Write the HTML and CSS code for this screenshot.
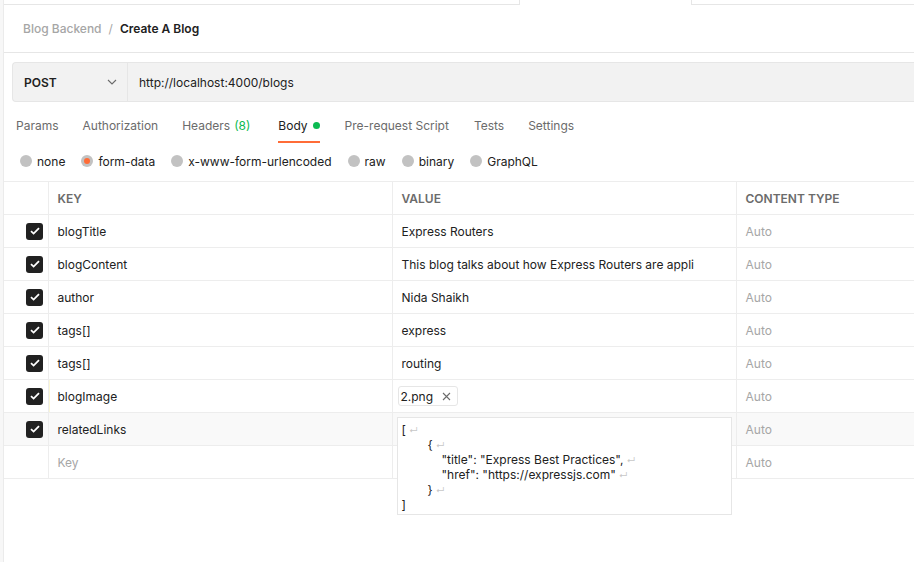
FILE: index.html
```html
<!DOCTYPE html>
<html>
<head>
<meta charset="utf-8">
<link rel="stylesheet" href="styles.css">
</head>
<body>
<div class="app">
  <div class="gutter"></div>
  <div class="main">
    <div class="tabstrip">
      <div class="ts-left"></div>
      <div class="ts-active"></div>
      <div class="ts-right"></div>
    </div>
    <div class="breadcrumb">
      <span class="crumb-parent">Blog Backend</span>
      <span class="crumb-sep">/</span>
      <span class="crumb-current">Create A Blog</span>
    </div>
    <div class="urlrow">
      <div class="urlbar">
        <div class="method">
          <span class="method-name">POST</span>
          <svg class="chev" width="10" height="6" viewBox="0 0 10 6"><path d="M1 1l4 4 4-4" fill="none" stroke="#6b6b6b" stroke-width="1.1"/></svg>
        </div>
        <div class="url">http://localhost:4000/blogs</div>
      </div>
    </div>
    <nav class="reqtabs">
      <span class="rtab">Params</span>
      <span class="rtab">Authorization</span>
      <span class="rtab headers">Headers <span class="count">(8)</span></span>
      <span class="rtab active">Body <span class="gdot"></span></span>
      <span class="rtab pre">Pre-request Script</span>
      <span class="rtab">Tests</span>
      <span class="rtab">Settings</span>
    </nav>
    <div class="bodytypes">
      <label class="radio"><span class="circle"></span>none</label>
      <label class="radio"><span class="circle on"></span>form-data</label>
      <label class="radio"><span class="circle"></span>x-www-form-urlencoded</label>
      <label class="radio"><span class="circle"></span>raw</label>
      <label class="radio"><span class="circle"></span>binary</label>
      <label class="radio"><span class="circle"></span>GraphQL</label>
    </div>
    <table class="params">
      <colgroup><col class="c-chk"><col class="c-key"><col class="c-val"><col class="c-type"></colgroup>
      <thead>
        <tr><th></th><th>KEY</th><th>VALUE</th><th>CONTENT TYPE</th></tr>
      </thead>
      <tbody>
        <tr><td class="chk"><span class="cb"><svg width="10" height="8" viewBox="0 0 10 8"><path d="M1 4.2l2.6 2.4L9 1.2" fill="none" stroke="#fff" stroke-width="1.8"/></svg></span></td><td>blogTitle</td><td>Express Routers</td><td class="auto">Auto</td></tr>
        <tr><td class="chk"><span class="cb"><svg width="10" height="8" viewBox="0 0 10 8"><path d="M1 4.2l2.6 2.4L9 1.2" fill="none" stroke="#fff" stroke-width="1.8"/></svg></span></td><td>blogContent</td><td>This blog talks about how Express Routers are appli</td><td class="auto">Auto</td></tr>
        <tr><td class="chk"><span class="cb"><svg width="10" height="8" viewBox="0 0 10 8"><path d="M1 4.2l2.6 2.4L9 1.2" fill="none" stroke="#fff" stroke-width="1.8"/></svg></span></td><td>author</td><td>Nida Shaikh</td><td class="auto">Auto</td></tr>
        <tr><td class="chk"><span class="cb"><svg width="10" height="8" viewBox="0 0 10 8"><path d="M1 4.2l2.6 2.4L9 1.2" fill="none" stroke="#fff" stroke-width="1.8"/></svg></span></td><td>tags[]</td><td>express</td><td class="auto">Auto</td></tr>
        <tr><td class="chk"><span class="cb"><svg width="10" height="8" viewBox="0 0 10 8"><path d="M1 4.2l2.6 2.4L9 1.2" fill="none" stroke="#fff" stroke-width="1.8"/></svg></span></td><td>tags[]</td><td>routing</td><td class="auto">Auto</td></tr>
        <tr><td class="chk"><span class="cb"><svg width="10" height="8" viewBox="0 0 10 8"><path d="M1 4.2l2.6 2.4L9 1.2" fill="none" stroke="#fff" stroke-width="1.8"/></svg></span></td><td class="key-mark">blogImage</td><td class="fileval"><span class="chip">2.png<svg class="x" width="9" height="9" viewBox="0 0 9 9"><path d="M1 1l7 7M8 1L1 8" stroke="#6b6b6b" stroke-width="1.1"/></svg></span></td><td class="auto">Auto</td></tr>
        <tr class="hover"><td class="chk"><span class="cb"><svg width="10" height="8" viewBox="0 0 10 8"><path d="M1 4.2l2.6 2.4L9 1.2" fill="none" stroke="#fff" stroke-width="1.8"/></svg></span></td><td>relatedLinks</td><td class="editing">
          <div class="editor">
            <div class="ln">[<span class="ret">↵</span></div>
            <div class="ln i1">{<span class="ret">↵</span></div>
            <div class="ln i2">"title": "Express Best Practices",<span class="ret">↵</span></div>
            <div class="ln i2">"href": "https://expressjs.com"<span class="ret">↵</span></div>
            <div class="ln i1">}<span class="ret">↵</span></div>
            <div class="ln">]</div>
          </div>
        </td><td class="auto">Auto</td></tr>
        <tr><td class="chk"></td><td class="placeholder">Key</td><td></td><td class="auto">Auto</td></tr>
      </tbody>
    </table>
  </div>
</div>
</body>
</html>
```

FILE: styles.css
```css
html, body {
  margin: 0;
  padding: 0;
  background: #fff;
}
body {
  font-family: Inter, "Noto Sans", sans-serif;
  font-size: 12px;
  color: #212121;
  width: 914px;
  height: 562px;
  overflow: hidden;
}
.app {
  display: flex;
  height: 562px;
}
.gutter {
  width: 3px;
  background: #f7f7f7;
  border-right: 1px solid #ebebeb;
  flex: none;
}
.main {
  flex: 1;
  min-width: 0;
  overflow: hidden;
}
.tabstrip {
  display: flex;
  height: 5px;
}
.ts-left {
  width: 515px;
  border-bottom: 1px solid #e6e6e6;
}
.ts-active {
  width: 171px;
  border-left: 1px solid #e6e6e6;
  border-right: 1px solid #e6e6e6;
}
.ts-right {
  flex: 1;
  border-bottom: 1px solid #e6e6e6;
}
.breadcrumb {
  height: 47px;
  border-bottom: 1px solid #e6e6e6;
  display: flex;
  align-items: center;
  padding-left: 19px;
  gap: 7px;
  font-weight: 500;
}
.crumb-parent { color: #a6a6a6; }
.crumb-sep { color: #a6a6a6; font-weight: 400; }
.crumb-current { color: #212121; font-weight: 600; }
.urlrow {
  padding: 9px 0 0 8px;
}
.urlbar {
  display: flex;
  height: 38px;
  background: #f2f2f2;
  border: 1px solid #e6e6e6;
  border-right: none;
  border-radius: 4px 0 0 4px;
}
.method {
  padding-left: 11px;
  padding-right: 10px;
  width: 93px;
  border-right: 1px solid #e6e6e6;
  display: flex;
  align-items: center;
  justify-content: space-between;
}
.method-name {
  font-weight: 600;
  font-size: 12px;
  color: #212121;
}
.url {
  display: flex;
  align-items: center;
  padding-left: 11px;
  color: #212121;
}
.reqtabs {
  display: flex;
  gap: 24px;
  padding-left: 12px;
  height: 33px;
  margin-top: 8px;
  align-items: stretch;
}
.rtab {
  display: flex;
  align-items: center;
  gap: 4px;
  color: #6b6b6b;
  border-bottom: 2px solid transparent;
}
.rtab.headers { margin-right: 4px; }
.rtab.active { margin-right: 1px; }
.rtab.pre { margin-right: 1px; }
.rtab.active {
  color: #212121;
  border-bottom-color: #ff6c37;
}
.count { color: #0cbb52; }
.gdot {
  width: 7px;
  height: 7px;
  border-radius: 50%;
  background: #0cbb52;
  display: inline-block;
  margin-left: 1px;
}
.bodytypes {
  display: flex;
  gap: 16px;
  padding-left: 16px;
  height: 36px;
  padding-bottom: 2px;
  align-items: center;
}
.radio {
  display: flex;
  align-items: center;
  gap: 5px;
  color: #212121;
}
.circle {
  width: 12px;
  height: 12px;
  border-radius: 50%;
  background: #c2c2c2;
  position: relative;
}
.circle.on::after {
  content: "";
  position: absolute;
  left: 3px;
  top: 3px;
  width: 6px;
  height: 6px;
  border-radius: 50%;
  background: #ff6c37;
}
.params {
  border-collapse: collapse;
  table-layout: fixed;
  width: 100%;
  border-top: 1px solid #ededed;
}
.c-chk { width: 44px; }
.c-key { width: 344px; }
.c-val { width: 344px; }
.params th, .params td {
  height: 32px;
  padding: 0 0 0 9px;
  border: 1px solid #ededed;
  text-align: left;
  white-space: nowrap;
  overflow: hidden;
  vertical-align: middle;
}
.params tr > :first-child { border-left: none; }
.params tr > :last-child { border-right: none; }
.params th {
  font-size: 12px;
  font-weight: 600;
  color: #6b6b6b;
}
.params td.chk { padding-left: 22px; }
.cb {
  width: 17px;
  height: 17px;
  border-radius: 3px;
  background: #212121;
  display: flex;
  align-items: center;
  justify-content: center;
}
.auto {
  color: #a6a6a6;
  font-size: 12px;
}
.placeholder { color: #a6a6a6; }
.key-mark { box-shadow: inset 1px 0 0 #fbf7d6; }
.fileval { padding-left: 5px !important; }
.chip {
  display: inline-flex;
  align-items: center;
  gap: 9px;
  height: 18px;
  padding: 0 6px 0 2px;
  border: 1px solid #e6e6e6;
  border-radius: 3px;
}
.hover td { background: #f9f9f9; }
.editing {
  position: relative;
  overflow: visible !important;
}
.editor {
  position: absolute;
  left: 4px;
  top: 4px;
  width: 329px;
  height: 88px;
  background: #fff;
  border: 1px solid #e6e6e6;
  padding: 4px 0 4px 4px;
  font-size: 12px;
  line-height: 15px;
  color: #212121;
  z-index: 2;
}
.ln { white-space: pre; height: 15px; }
.ln.i1 { padding-left: 26px; }
.ln.i2 { padding-left: 40px; }
.ret {
  color: #c8c8c8;
  font-size: 9px;
  line-height: 1;
  margin-left: 3px;
}
```
